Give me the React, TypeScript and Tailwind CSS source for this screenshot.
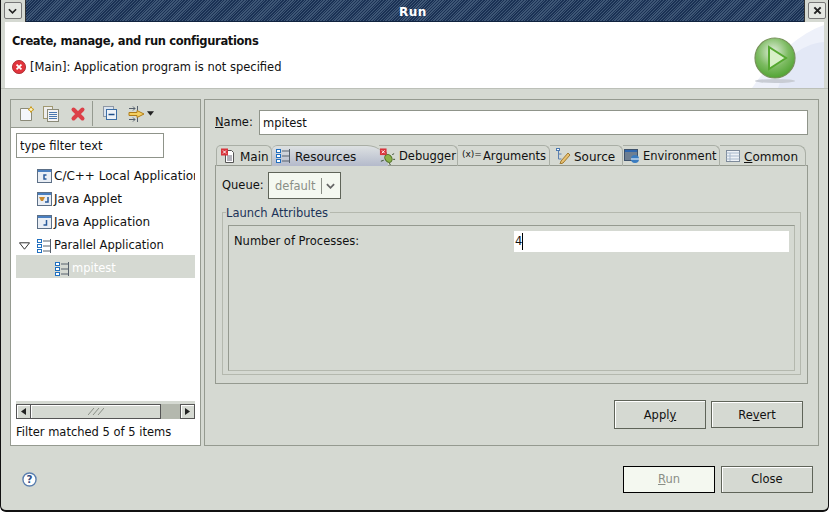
function ParallelIcon() {
  return (
    <svg viewBox="0 0 16 16" className="w-4 h-4 shrink-0">
      <g fill="#fff" stroke="#1f6fc0" strokeWidth="1">
        <rect x="0.5" y="1.5" width="4" height="3" />
        <rect x="0.5" y="6.5" width="4" height="3" />
        <rect x="0.5" y="11.5" width="4" height="3" />
      </g>
      <path d="M6 3h7M6 8h8M6 13h7M13.500 1v14" stroke="#56606c" fill="none" />
    </svg>
  );
}

function PageIcon() {
  return (
    <svg viewBox="0 0 16 16" className="w-4 h-4 shrink-0">
      <path d="M5.500 2.500h6l2 2v10h-8z" fill="#fff" stroke="#555" />
      <path d="M7 8h5M7 10h5M7 12h5" stroke="#667" />
      <rect x="1" y="0.500" width="7" height="7" fill="#d8343c" />
      <path d="M3 2.500l3 3M6 2.500l-3 3" stroke="#fff" />
    </svg>
  );
}

function BugIcon() {
  return (
    <svg viewBox="0 0 18 18" className="w-[17px] h-[17px] shrink-0">
      <ellipse cx="10" cy="11" rx="3.500" ry="4.500" fill="#8cb24a" stroke="#4a6b22" transform="rotate(-35 10 11)" />
      <path d="M8 6l-1-2M14 7l2-1M15 12l2 0M11 16l1 2M5 13l-3 1" stroke="#33472a" />
      <rect x="1" y="0.500" width="7" height="7" fill="#d8343c" />
      <path d="M3 2.500l3 3M6 2.500l-3 3" stroke="#fff" />
    </svg>
  );
}

function ClassIcon({ kind }: { kind: "c" | "j" | "a" }) {
  return (
    <svg viewBox="0 0 16 16" className="w-4 h-4 shrink-0">
      <rect x="0.500" y="1.500" width="14" height="13" fill="#e9eef5" stroke="#5c6f86" />
      <rect x="1" y="2" width="13" height="2" fill="#4a7fc0" />
      {kind === "c" && <path d="M9.500 7h-2.500v4h2.500" fill="none" stroke="#2a5b9b" strokeWidth="1.500" />}
      {kind === "j" && <path d="M9.500 6v5h-3" fill="none" stroke="#2a5b9b" strokeWidth="1.500" />}
      {kind === "a" && (
        <>
          <path d="M2 6h6l-2 4h-2z" fill="#c8892e" />
          <path d="M11 6v5h-3" fill="none" stroke="#2a5b9b" strokeWidth="1.500" />
        </>
      )}
    </svg>
  );
}

function TreeRow({ icon, label, indent, className = "pt-px" }: { icon: React.ReactNode; label: string; indent: string; className?: string }) {
  return (
    <div className={`h-[23px] flex items-center gap-px ${indent} whitespace-nowrap overflow-hidden ${className}`}>
      {icon}
      <span>{label}</span>
    </div>
  );
}

function Btn({ children, className = "" }: { children: React.ReactNode; className?: string }) {
  return (
    <button className={`w-[92px] h-[27px] pt-[2px] border border-[#5f6459] bg-[#d5d9d2] shadow-[inset_1px_1px_0_#fff] text-[#111] ${className}`}>
      {children}
    </button>
  );
}

function Tab({ icon, children, className = "" }: { icon: React.ReactNode; children: React.ReactNode; className?: string }) {
  return (
    <div className={`relative h-[21px] flex items-center whitespace-nowrap border-t border-r border-[#a9aea5] rounded-tr-[6px] ${className}`}>
      {icon}
      <span className="pt-px">{children}</span>
    </div>
  );
}

export default function App() {
  return (
    <div className="w-[829px] h-[512px] flex flex-col overflow-hidden rounded-b-[6px] border-b-2 border-x border-[#111] bg-[#d5d9d2] font-['DejaVu_Sans',sans-serif] text-[11.5px] text-[#111]">
      {/* title bar */}
      <div className="h-[22px] flex items-center -mx-px bg-[repeating-linear-gradient(135deg,#1a3154_0,#1a3154_1px,#3e5675_1px,#3e5675_2px)] border-b border-[#10233f]">
        <div className="w-[26px] h-[22px] flex items-center justify-center bg-[#d5d9d2] border-r border-[#333]">
          <div className="w-[18px] h-[17px] border border-[#777] rounded-[2px] bg-[#e4e7e2] flex items-center justify-center">
            <svg viewBox="0 0 10 6" className="w-[9px] h-[6px]"><path d="M1 1l4 4 4-4" fill="none" stroke="#222" strokeWidth="1.800" /></svg>
          </div>
        </div>
        <div className="flex-1 text-center text-white font-bold text-[12px] tracking-[0.5px] pt-[3px] pr-[4px]">Run</div>
        <div className="w-[25px] h-[22px] flex items-center justify-center bg-[#d5d9d2] border-l border-[#333]">
          <div className="w-[18px] h-[17px] border border-[#777] rounded-[2px] bg-[#e4e7e2] flex items-center justify-center">
            <svg viewBox="0 0 10 10" className="w-[9px] h-[9px]"><path d="M1.500 1.500l7 7M8.500 1.500l-7 7" fill="none" stroke="#222" strokeWidth="2.200" /></svg>
          </div>
        </div>
      </div>

      {/* header */}
      <div className="mx-1 h-[66px] relative bg-white pl-[7px] pt-[11px] overflow-hidden">
        <svg viewBox="0 0 80 66" className="absolute right-0 top-0 w-[80px] h-[66px]">
          <path d="M80 3C50 14 28 38 8 66h72z" fill="#eef1fa" />
          <path d="M80 20C68 21 56 26 46 36 42 44 38 55 34 66h46z" fill="#e3e8f6" />
        </svg>
        <svg viewBox="0 0 44 50" className="absolute right-[27px] top-[14px] w-[44px] h-[50px]">
          <defs>
            <radialGradient id="ball" cx="0.45" cy="0.35" r="0.7">
              <stop offset="0" stopColor="#e4efe0" />
              <stop offset="0.55" stopColor="#7dbb62" />
              <stop offset="1" stopColor="#49a02a" />
            </radialGradient>
          </defs>
          <ellipse cx="22" cy="45" rx="20" ry="2" fill="#c8ccd4" />
          <circle cx="22" cy="22" r="20" fill="url(#ball)" stroke="#76915a" strokeWidth="1.200" />
          <path d="M16 11l17 11-17 11z" fill="#d8f0c8" stroke="#55a830" strokeWidth="2" />
        </svg>
        <div className="font-bold tracking-[-0.35px] leading-[16px]">Create, manage, and run configurations</div>
        <div className="mt-[10px] flex items-center gap-[4px] leading-[16px]">
          <svg viewBox="0 0 16 16" className="w-[14px] h-[14px]">
            <circle cx="8" cy="8" r="7.500" fill="#e2343c" stroke="#a82a30" />
            <path d="M5.200 5.200l5.600 5.600M10.800 5.200l-5.600 5.600" stroke="#fff" strokeWidth="2" />
          </svg>
          <span>[Main]: Application program is not specified</span>
        </div>
      </div>

      {/* main area */}
      <div className="flex gap-[3px] pl-[9px] pr-[9px] pt-[10px] border-t border-[#bcc0b8]">
        {/* left */}
        <div className="w-[191px] h-[347px] flex flex-col border border-[#959a90] bg-white">
          <div className="h-[28px] shrink-0 flex items-center bg-[#d5d9d2] border-b border-[#959a90] pl-[8px]">
            <svg viewBox="0 0 16 16" className="w-4 h-4">
              <path d="M1.500 2.500h8l3 3v9h-11z" fill="#f4f6fb" stroke="#8a8a78" />
              <path d="M12 0.500l1 2 2 1-2 1-1 2-1-2-2-1 2-1z" fill="#fff4c0" stroke="#c89a20" />
            </svg>
            <svg viewBox="0 0 16 16" className="w-4 h-4 ml-[8px]">
              <rect x="0.500" y="0.500" width="9" height="12" fill="#eee" stroke="#a09870" />
              <rect x="4.500" y="3.500" width="11" height="12" fill="#f4f4f4" stroke="#8a8a78" />
              <path d="M6 6.500h8M6 8.500h8M6 10.500h8M6 12.500h8" stroke="#4a78b0" />
            </svg>
            <svg viewBox="0 0 16 16" className="w-4 h-4 ml-[11px]">
              <path d="M3.500 3.500l9 9M12.500 3.500l-9 9" stroke="#dc4048" strokeWidth="4" strokeLinecap="round" />
            </svg>
            <div className="w-px h-[25px] bg-[#959a90] ml-[6px]" />
            <svg viewBox="0 0 16 16" className="w-4 h-4 ml-[10px]">
              <rect x="0.500" y="0.500" width="10" height="10" fill="#dbe4ef" stroke="#8d97a5" />
              <rect x="3.500" y="3.500" width="10" height="10" fill="#eef2f7" stroke="#3c6ea5" />
              <path d="M5.500 8.500h6" stroke="#1f4f8a" strokeWidth="1.500" />
            </svg>
            <svg viewBox="0 0 18 16" className="w-[18px] h-4 ml-[9px]">
              <path d="M1 2.500h6M5 0.500l2 2-2 2M9.500 0v5M1 13.500h6M5 11.500l2 2-2 2M9.500 11v5" stroke="#56606c" fill="none" />
              <path d="M1 6.500h8V4.500l7 3.500-7 3.500V9.500H1z" fill="#f4cf60" stroke="#b07c18" />
            </svg>
            <svg viewBox="0 0 8 5" className="w-[7px] h-[5px] ml-[1px]"><path d="M0 0h8L4 5z" fill="#222" /></svg>
          </div>
          <input readOnly value="type filter text" className="ml-[5px] mt-[5px] w-[148px] h-[25px] shrink-0 border border-[#8f948a] bg-white px-[3px] outline-none" />
          <div className="mt-[6px] flex-1 min-h-0 ml-[5px] mr-[5px]">
            <TreeRow indent="pl-[21px]" className="text-[12px] pt-px" icon={<ClassIcon kind="c" />} label="C/C++ Local Application" />
            <TreeRow indent="pl-[21px]" className="text-[12px] pt-px" icon={<ClassIcon kind="a" />} label="Java Applet" />
            <TreeRow indent="pl-[21px]" className="text-[12px] pt-px" icon={<ClassIcon kind="j" />} label="Java Application" />
            <TreeRow
              indent="pl-[3px]"
              className="pt-[3px]"
              icon={
                <>
                  <svg viewBox="0 0 12 8" className="w-[11px] h-[8px] mr-[6px] shrink-0"><path d="M0.500 0.500h11L6 7.500z" fill="#fff" stroke="#222" /></svg>
                  <ParallelIcon />
                </>
              }
              label="Parallel Application"
            />
            <div className="h-[23px] -mt-px flex items-center gap-px pt-[4px] pl-[39px] bg-[#d5d9d2] text-white">
              <ParallelIcon />
              <span>mpitest</span>
            </div>
          </div>
          <div className="mx-[5px] h-[18px] flex bg-[#d5d9d2] pt-[3px] shrink-0">
            <div className="w-[15px] border border-[#555] shadow-[inset_1px_1px_0_#fff] flex items-center justify-center"><svg viewBox="0 0 5 7" className="w-[5px] h-[7px]"><path d="M5 0v7L0 3.500z" fill="#222" /></svg></div>
            <div className="w-[130px] border-y border-r border-[#555] shadow-[inset_1px_1px_0_#fff] flex items-center justify-center"><svg viewBox="0 0 16 7" className="w-4 h-[7px]"><path d="M0 7l6-7M5 7l6-7M10 7l6-7" stroke="#8a8f86" /></svg></div>
            <div className="flex-1 bg-[#b4b8ae] border-y border-[#b4b8ae]" />
            <div className="w-[15px] border border-[#555] shadow-[inset_1px_1px_0_#fff] flex items-center justify-center"><svg viewBox="0 0 5 7" className="w-[5px] h-[7px]"><path d="M0 0v7l5-3.500z" fill="#222" /></svg></div>
          </div>
          <div className="h-[26px] ml-[5px] pt-[2px] shrink-0 flex items-center">Filter matched 5 of 5 items</div>
        </div>

        {/* right */}
        <div className="w-[616px] h-[347px] border border-[#959a90] pl-[10px] pr-[10px] pt-[10px] flex flex-col">
          <div className="flex items-center">
            <span className="w-[44px] pt-px"><u>N</u>ame:</span>
            <input readOnly value="mpitest" className="w-[549px] h-[25px] border border-[#8f948a] bg-white px-[3px] outline-none" />
          </div>
          {/* tabs */}
          <div className="mt-[10px] w-[593px] h-[21px] flex border-b border-[#959a90] pl-px text-[12px]">
            <Tab icon={<PageIcon />} className="w-[56px] pl-[3px] gap-[4px] rounded-tl-[5px] border-l">Main</Tab>
            <div className="w-[116px] h-[21px] flex items-center gap-[3px] pl-[4px] whitespace-nowrap rounded-tl-[6px] rounded-tr-[24px] bg-[linear-gradient(#dde1e2,#b4bacb)] border-t border-[#a9aea5]">
              <ParallelIcon /><span className="pt-px">Resources</span>
            </div>
            <Tab icon={<BugIcon />} className="-ml-[9px] w-[79px] text-[11.5px] pl-0 gap-[3px]">Debugger</Tab>
            <Tab icon={<span className="text-[9px] w-[21px] shrink-0 leading-none -mt-[3px]">(x)=</span>} className="w-[92px] text-[11.5px] pl-[4px]">Arguments</Tab>
            <Tab
              className="w-[73px] pl-[5px] gap-[3px]"
              icon={
                <svg viewBox="0 0 16 16" className="w-4 h-4 shrink-0">
                  <path d="M3.500 2v9h3M3.500 6h3" stroke="#5c80b0" fill="none" />
                  <rect x="1.500" y="0.500" width="3" height="2" fill="#fff" stroke="#4a78b0" />
                  <path d="M6 13l7-8 2 2-7 8-3 1z" fill="#e8c070" stroke="#a07a30" />
                </svg>
              }
            >Source</Tab>
            <Tab
              className="w-[97px] text-[11.5px] pl-[1px] gap-[3px]"
              icon={
                <svg viewBox="0 0 16 16" className="w-4 h-4 shrink-0">
                  <rect x="0.500" y="1.500" width="13" height="11" fill="#6e7f92" stroke="#3e526b" />
                  <rect x="1" y="2" width="12" height="2" fill="#2f67ae" />
                  <circle cx="11" cy="11" r="4" fill="#3a7cc0" />
                  <path d="M7 11h8" stroke="#fff" />
                </svg>
              }
            >Environment</Tab>
            <Tab
              className="w-[86px] pl-[5px] gap-[3px] rounded-tr-[8px]"
              icon={
                <svg viewBox="0 0 16 16" className="w-4 h-4 shrink-0">
                  <rect x="1.500" y="2.500" width="13" height="11" fill="#eef2f7" stroke="#7d8a9a" />
                  <path d="M1.500 5h13M1.500 8h13M1.500 11h13M5 5v8" stroke="#a7b8cc" />
                </svg>
              }
            ><u>C</u>ommon</Tab>
          </div>
          <div className="w-[593px] h-[218px] border-x border-b border-[#959a90] px-[6px] pt-[6px] flex flex-col">
            <div className="flex items-center">
              <span className="w-[46px] pt-px">Queue:</span>
              <div className="w-[73px] h-[27px] border border-[#5f6459] bg-[#f4f8f0] flex items-center pl-[6px] text-[#8a8e86]">
                <span className="w-[46px] pt-[3px]">default</span>
                <div className="w-px h-[16px] bg-[#8a8e86]" />
                <svg viewBox="0 0 10 6" className="w-[9px] h-[6px] ml-[4px]"><path d="M1 1l4 4 4-4" fill="none" stroke="#666" strokeWidth="2" /></svg>
              </div>
            </div>
            <fieldset className="mt-[6px] h-[170px] border border-[#b4b8ae] px-[5px]">
              <legend className="text-[#1c3358] ml-[-2px] pr-[2px] leading-[14px] translate-y-px">Launch Attributes</legend>
              <div className="h-[146px] border border-[#959a90] border-r-[#b4b8ae] border-b-[#b4b8ae] mt-[6px] pt-[5px] pl-[5px] pr-[5px] flex items-start">
                <span className="w-[280px] leading-[21px]">Number of Processes:</span>
                <div className="w-[275px] h-[21px] bg-white flex items-center pl-px">
                  4<span className="w-px h-[17px] bg-black" />
                </div>
              </div>
            </fieldset>
          </div>
          <div className="mt-[16px] w-[588px] flex justify-end items-center gap-[5px]">
            <Btn className="h-[29px]">Appl<u>y</u></Btn>
            <Btn>Re<u>v</u>ert</Btn>
          </div>
        </div>
      </div>

      {/* footer */}
      <div className="flex-1 flex items-center pl-[21px] pr-[15px] pt-[2px]">
        <svg viewBox="0 0 16 16" className="w-[15px] h-[15px]">
          <circle cx="8" cy="8" r="7" fill="#fff" stroke="#5c80b0" strokeWidth="1.500" />
          <text x="8" y="12" textAnchor="middle" fontSize="11" fontWeight="bold" fill="#2f4f86">?</text>
        </svg>
        <div className="ml-auto flex gap-[6px]">
          <button className="w-[92px] h-[27px] pt-[2px] border border-black bg-[#f4f8f0] text-[#8a8e86]"><u>R</u>un</button>
          <Btn>Close</Btn>
        </div>
      </div>
    </div>
  );
}
